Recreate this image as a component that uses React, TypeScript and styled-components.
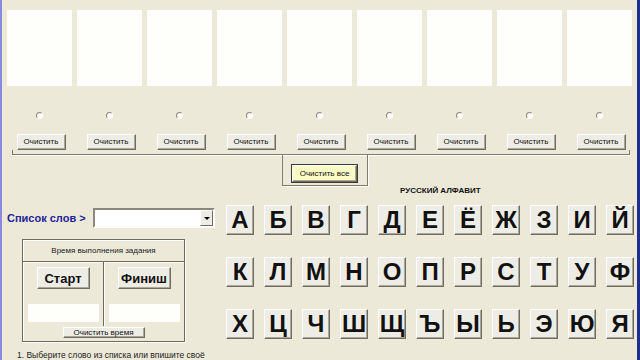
import React from 'react';
import styled, { createGlobalStyle } from 'styled-components';

const GlobalStyle = createGlobalStyle`
  html, body {
    margin: 0;
    padding: 0;
    background: #ece9d8;
  }
  #root {
    width: 640px;
    height: 360px;
  }
`;

const Window = styled.div`
  width: 640px;
  height: 360px;
  box-sizing: border-box;
  overflow: hidden;
  background: #ece9d8;
  border-left: 2px solid #8a8ade;
  border-right: 3px solid #1e2f8f;
  font-family: "Liberation Sans", Arial, sans-serif;
  display: flex;
  flex-direction: column;
`;

const SlotsRow = styled.div`
  display: flex;
  gap: 5px;
  padding: 10px 0 0 5px;
`;

const Slot = styled.div`
  width: 65px;
  display: flex;
  flex-direction: column;
  align-items: center;
`;

const Panel = styled.div`
  width: 65px;
  height: 76px;
  background: #fefefb;
`;

const Radio = styled.div`
  width: 7px;
  height: 7px;
  margin-top: 26px;
  border-radius: 50%;
  box-sizing: border-box;
  border: 1px solid;
  border-color: #8e8b7e #fff #fff #8e8b7e;
  background: #fbfbf8;
`;

const Button = styled.button<{ $w: number; $h: number; $size?: number; $bold?: boolean; $yellow?: boolean }>`
  width: ${p => p.$w}px;
  height: ${p => p.$h}px;
  padding: 0;
  box-sizing: border-box;
  font-family: "Liberation Sans", Arial, sans-serif;
  font-size: ${p => p.$size ?? 8}px;
  font-weight: ${p => (p.$bold ? 'bold' : 'normal')};
  color: #111;
  background: ${p => (p.$yellow ? '#fbfac4' : '#eeede5')};
  border: 1px solid;
  border-color: #fff #6f6d62 #6f6d62 #fff;
  box-shadow: inset -1px -1px 0 #aca899${p => (p.$yellow ? ', 0 0 0 1px #3a3a30' : '')};
  display: flex;
  align-items: center;
  justify-content: center;
  line-height: 1;
`;

const SlotButton = styled(Button)`
  margin-top: 15px;
  margin-left: 3px;
`;

const Bracket = styled.div`
  height: 5px;
  margin: 0 7px 0 10px;
  border: 1px solid #7f7c6f;
  border-top: none;
  box-shadow: 0 1px 0 #fff;
`;

const CenterBox = styled.div`
  width: 86px;
  height: 33px;
  margin-left: 280px;
  box-sizing: border-box;
  border: 1px solid #7f7c6f;
  border-top: none;
  box-shadow: 1px 1px 0 #fff;
  padding: 10px 0 0 9px;
`;

const Lower = styled.div`
  display: flex;
  padding-left: 5px;
`;

const LeftCol = styled.div`
  width: 208px;
  padding-top: 22px;
  display: flex;
  flex-direction: column;
`;

const WordRow = styled.div`
  display: flex;
  align-items: center;
  height: 20px;
`;

const WordLabel = styled.span`
  font-size: 11px;
  font-weight: bold;
  color: #1f2499;
  white-space: nowrap;
`;

const Select = styled.div`
  margin-left: auto;
  width: 122px;
  height: 20px;
  box-sizing: border-box;
  background: #fff;
  border: 2px solid;
  border-color: #8b887c #fff #fff #8b887c;
  display: flex;
  justify-content: flex-end;
`;

const DropButton = styled.div`
  width: 13px;
  height: 16px;
  box-sizing: border-box;
  background: #eeede5;
  border: 1px solid;
  border-color: #fff #6f6d62 #6f6d62 #fff;
  display: flex;
  align-items: center;
  justify-content: center;
  &::after {
    content: "";
    border-left: 3px solid transparent;
    border-right: 3px solid transparent;
    border-top: 3px solid #000;
  }
`;

const TimeBox = styled.div`
  margin: 11px 0 0 15px;
  width: 163px;
  height: 103px;
  box-sizing: border-box;
  border: 1px solid #6e6b5e;
  box-shadow: inset 1px 1px 0 #fff, 1px 1px 0 #fff;
  display: flex;
  flex-direction: column;
`;

const TimeHeader = styled.div`
  height: 21px;
  border-bottom: 1px solid #6e6b5e;
  box-shadow: 0 1px 0 #fff;
  font-size: 8px;
  color: #222;
  display: flex;
  align-items: center;
  justify-content: center;
`;

const TimeBody = styled.div`
  display: flex;
  height: 64px;
`;

const TimeHalf = styled.div<{ $divider?: boolean }>`
  flex: 1;
  display: flex;
  flex-direction: column;
  align-items: center;
  padding-top: 5px;
  border-right: ${p => (p.$divider ? '1px solid #6e6b5e' : 'none')};
  box-shadow: ${p => (p.$divider ? '1px 0 0 #fff' : 'none')};
`;

const TimeField = styled.div`
  margin-top: 15px;
  width: 71px;
  height: 18px;
  background: #fefefb;
`;

const ClearTimeRow = styled.div`
  display: flex;
  justify-content: center;
  margin-top: 1px;
`;

const Note = styled.div`
  margin: 8px 0 0 10px;
  font-size: 8.5px;
  color: #222;
  white-space: nowrap;
`;

const RightCol = styled.div`
  margin-left: 11px;
  display: flex;
  flex-direction: column;
`;

const AlphabetTitle = styled.div`
  font-size: 8px;
  font-weight: bold;
  line-height: 10px;
  padding-left: 174px;
  color: #111;
`;

const LetterGrid = styled.div`
  margin-top: 9px;
  display: grid;
  grid-template-columns: repeat(11, 28px);
  column-gap: 10px;
  row-gap: 22px;
`;

const slots = Array.from({ length: 9 }, (_, i) => i);

const letters = [
  'А', 'Б', 'В', 'Г', 'Д', 'Е', 'Ё', 'Ж', 'З', 'И', 'Й',
  'К', 'Л', 'М', 'Н', 'О', 'П', 'Р', 'С', 'Т', 'У', 'Ф',
  'Х', 'Ц', 'Ч', 'Ш', 'Щ', 'Ъ', 'Ы', 'Ь', 'Э', 'Ю', 'Я',
];

const App: React.FC = () => {
  return (
    <>
      <GlobalStyle />
      <Window>
        <SlotsRow>
          {slots.map(i => (
            <Slot key={i}>
              <Panel />
              <Radio />
              <SlotButton $w={49} $h={16}>Очистить</SlotButton>
            </Slot>
          ))}
        </SlotsRow>
        <Bracket />
        <CenterBox>
          <Button $w={65} $h={17} $yellow>Очистить все</Button>
        </CenterBox>
        <Lower>
          <LeftCol>
            <WordRow>
              <WordLabel>Список слов &gt;</WordLabel>
              <Select>
                <DropButton />
              </Select>
            </WordRow>
            <TimeBox>
              <TimeHeader>Время выполнения задания</TimeHeader>
              <TimeBody>
                <TimeHalf $divider>
                  <Button $w={53} $h={22} $size={13} $bold>Старт</Button>
                  <TimeField />
                </TimeHalf>
                <TimeHalf>
                  <Button $w={53} $h={22} $size={13} $bold>Финиш</Button>
                  <TimeField />
                </TimeHalf>
              </TimeBody>
              <ClearTimeRow>
                <Button $w={82} $h={11} $size={8}>Очистить время</Button>
              </ClearTimeRow>
            </TimeBox>
            <Note>1. Выберите слово из списка или впишите своё</Note>
          </LeftCol>
          <RightCol>
            <AlphabetTitle>РУССКИЙ АЛФАВИТ</AlphabetTitle>
            <LetterGrid>
              {letters.map(l => (
                <Button key={l} $w={28} $h={30} $size={24} $bold>{l}</Button>
              ))}
            </LetterGrid>
          </RightCol>
        </Lower>
      </Window>
    </>
  );
};

export default App;
